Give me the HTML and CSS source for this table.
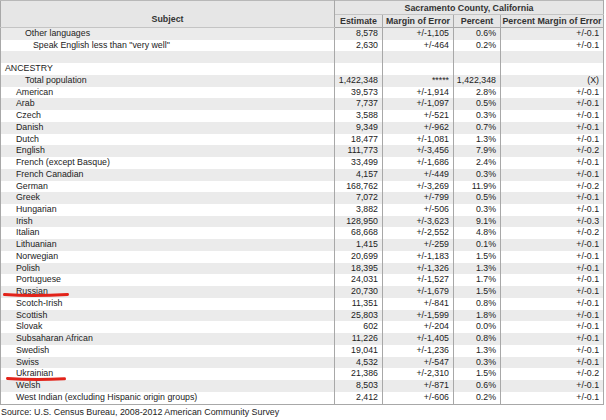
FILE: index.html
```html
<!DOCTYPE html>
<html>
<head>
<meta charset="utf-8">
<link rel="stylesheet" href="styles.css">
</head>
<body>
<table class="census">
  <colgroup>
    <col class="c-subj"><col class="c-est"><col class="c-moe"><col class="c-pct"><col class="c-pmoe">
  </colgroup>
  <thead>
    <tr class="h1">
      <th rowspan="2" class="subj-h">Subject</th>
      <th colspan="4">Sacramento County, California</th>
    </tr>
    <tr class="h2">
      <th>Estimate</th><th>Margin of Error</th><th>Percent</th><th>Percent Margin of Error</th>
    </tr>
  </thead>
  <tbody>
    <tr><td class="i2">Other languages</td><td>8,578</td><td>+/-1,105</td><td>0.6%</td><td>+/-0.1</td></tr>
    <tr><td class="i3">Speak English less than "very well"</td><td>2,630</td><td>+/-464</td><td>0.2%</td><td>+/-0.1</td></tr>
    <tr><td class="i0"></td><td></td><td></td><td></td><td></td></tr>
    <tr><td class="i0">ANCESTRY</td><td></td><td></td><td></td><td></td></tr>
    <tr><td class="i2">Total population</td><td>1,422,348</td><td>*****</td><td>1,422,348</td><td>(X)</td></tr>
    <tr><td class="i1">American</td><td>39,573</td><td>+/-1,914</td><td>2.8%</td><td>+/-0.1</td></tr>
    <tr><td class="i1">Arab</td><td>7,737</td><td>+/-1,097</td><td>0.5%</td><td>+/-0.1</td></tr>
    <tr><td class="i1">Czech</td><td>3,588</td><td>+/-521</td><td>0.3%</td><td>+/-0.1</td></tr>
    <tr><td class="i1">Danish</td><td>9,349</td><td>+/-962</td><td>0.7%</td><td>+/-0.1</td></tr>
    <tr><td class="i1">Dutch</td><td>18,477</td><td>+/-1,081</td><td>1.3%</td><td>+/-0.1</td></tr>
    <tr><td class="i1">English</td><td>111,773</td><td>+/-3,456</td><td>7.9%</td><td>+/-0.2</td></tr>
    <tr><td class="i1">French (except Basque)</td><td>33,499</td><td>+/-1,686</td><td>2.4%</td><td>+/-0.1</td></tr>
    <tr><td class="i1">French Canadian</td><td>4,157</td><td>+/-449</td><td>0.3%</td><td>+/-0.1</td></tr>
    <tr><td class="i1">German</td><td>168,762</td><td>+/-3,269</td><td>11.9%</td><td>+/-0.2</td></tr>
    <tr><td class="i1">Greek</td><td>7,072</td><td>+/-799</td><td>0.5%</td><td>+/-0.1</td></tr>
    <tr><td class="i1">Hungarian</td><td>3,882</td><td>+/-506</td><td>0.3%</td><td>+/-0.1</td></tr>
    <tr><td class="i1">Irish</td><td>128,950</td><td>+/-3,623</td><td>9.1%</td><td>+/-0.3</td></tr>
    <tr><td class="i1">Italian</td><td>68,668</td><td>+/-2,552</td><td>4.8%</td><td>+/-0.2</td></tr>
    <tr><td class="i1">Lithuanian</td><td>1,415</td><td>+/-259</td><td>0.1%</td><td>+/-0.1</td></tr>
    <tr><td class="i1">Norwegian</td><td>20,699</td><td>+/-1,183</td><td>1.5%</td><td>+/-0.1</td></tr>
    <tr><td class="i1">Polish</td><td>18,395</td><td>+/-1,326</td><td>1.3%</td><td>+/-0.1</td></tr>
    <tr><td class="i1">Portuguese</td><td>24,031</td><td>+/-1,527</td><td>1.7%</td><td>+/-0.1</td></tr>
    <tr><td class="i1 mark">Russian<svg class="ink ink-ru" width="66" height="6" viewBox="0 0 66 6"><path d="M1.5 2.6 C 20 3.8, 45 3.6, 64.5 2.4" /></svg></td><td>20,730</td><td>+/-1,679</td><td>1.5%</td><td>+/-0.1</td></tr>
    <tr><td class="i1">Scotch-Irish</td><td>11,351</td><td>+/-841</td><td>0.8%</td><td>+/-0.1</td></tr>
    <tr><td class="i1">Scottish</td><td>25,803</td><td>+/-1,599</td><td>1.8%</td><td>+/-0.1</td></tr>
    <tr><td class="i1">Slovak</td><td>602</td><td>+/-204</td><td>0.0%</td><td>+/-0.1</td></tr>
    <tr><td class="i1">Subsaharan African</td><td>11,226</td><td>+/-1,405</td><td>0.8%</td><td>+/-0.1</td></tr>
    <tr><td class="i1">Swedish</td><td>19,041</td><td>+/-1,236</td><td>1.3%</td><td>+/-0.1</td></tr>
    <tr><td class="i1">Swiss</td><td>4,532</td><td>+/-547</td><td>0.3%</td><td>+/-0.1</td></tr>
    <tr><td class="i1 mark">Ukrainian<svg class="ink ink-uk" width="60" height="6" viewBox="0 0 60 6"><path d="M1.5 2.4 C 18 3.6, 40 3.6, 58.5 2.8" /></svg></td><td>21,386</td><td>+/-2,310</td><td>1.5%</td><td>+/-0.2</td></tr>
    <tr><td class="i1">Welsh</td><td>8,503</td><td>+/-871</td><td>0.6%</td><td>+/-0.1</td></tr>
    <tr><td class="i1">West Indian (excluding Hispanic origin groups)</td><td>2,412</td><td>+/-606</td><td>0.2%</td><td>+/-0.1</td></tr>
  </tbody>
</table>
<p class="source">Source: U.S. Census Bureau, 2008-2012 American Community Survey</p>
</body>
</html>
```

FILE: styles.css
```css
html, body {
  margin: 0;
  padding: 0;
  background: #ffffff;
}

body {
  font-family: "Liberation Sans", Arial, sans-serif;
  font-size: 8.8px;
  color: #222222;
}

.census {
  border-collapse: collapse;
  table-layout: fixed;
  width: 603px;
}

.c-subj { width: 334px; }
.c-est { width: 48px; }
.c-moe { width: 71px; }
.c-pct { width: 47px; }
.c-pmoe { width: 103px; }

.census th {
  background: #e6e6e6;
  font-size: 8.9px;
  font-weight: bold;
  text-align: center;
  color: #333333;
  padding: 0 1px;
  border-left: 1px solid #a8a8a8;
  border-right: 1px solid #a8a8a8;
  white-space: nowrap;
}

.census .h1 th {
  height: 13px;
  line-height: 12px;
  border-top: 1px solid #b8b8b8;
  border-bottom: 1px solid #c4c4c4;
}

.census .h2 th {
  height: 11px;
  line-height: 12px;
  border-bottom: 1px solid #a8a8a8;
}

.census th.subj-h {
  padding-top: 9px;
}

.census td {
  height: 11.74px;
  line-height: 11.74px;
  padding: 0 4px 0 1px;
  text-align: right;
  white-space: nowrap;
  overflow: visible;
  border-left: 1px solid #a8a8a8;
  border-right: 1px solid #a8a8a8;
}

.census tbody tr:nth-child(odd) td {
  background: #ebebeb;
}

.census tbody tr:last-child td {
  border-bottom: 1px solid #a8a8a8;
}

.census td.i0,
.census td.i1,
.census td.i2,
.census td.i3 {
  text-align: left;
}

.census td.i0 { padding-left: 4px; }
.census td.i1 { padding-left: 15px; }
.census td.i2 { padding-left: 24px; }
.census td.i3 { padding-left: 32px; }

.census td.mark {
  position: relative;
}

.ink {
  position: absolute;
  overflow: visible;
}

.ink path {
  fill: none;
  stroke: #e2231a;
  stroke-width: 3;
  stroke-linecap: round;
}

.ink-ru {
  left: 2px;
  top: 6px;
}

.ink-uk {
  left: 5px;
  top: 8px;
}

.source {
  margin: 1px 0 0 1px;
  font-size: 8.9px;
  line-height: 12px;
  color: #222222;
}
```
